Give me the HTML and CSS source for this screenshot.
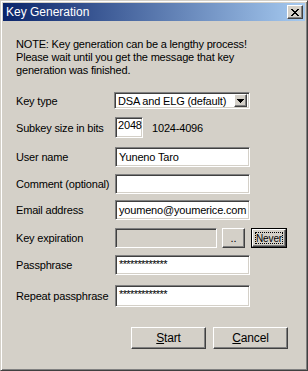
FILE: index.html
```html
<!DOCTYPE html>
<html>
<head>
<meta charset="utf-8">
<title>Key Generation</title>
<link rel="stylesheet" href="styles.css">
</head>
<body>
<div class="window">
  <div class="titlebar">
    <span class="title">Key Generation</span>
    <span class="close raised"><svg class="xicon" width="8" height="7" viewBox="0 0 8 7"><path d="M0 0h2v1H0z M6 0h2v1H6z M1 1h2v1H1z M5 1h2v1H5z M2 2h4v1H2z M3 3h2v1H3z M2 4h4v1H2z M1 5h2v1H1z M5 5h2v1H5z M0 6h2v1H0z M6 6h2v1H6z"/></svg></span>
  </div>
  <div class="content">
    <p class="note">NOTE: Key generation can be a lengthy process!<br>Please wait until you get the message that key<br>generation was finished.</p>
    <div class="form">
      <div class="row r1">
        <span class="label">Key type</span>
        <div class="select sunken">
          <span class="select-text">DSA and ELG (default)</span>
          <span class="drop raised"><svg width="7" height="4" viewBox="0 0 7 4"><path d="M0 0h7v1H0z M1 1h5v1H1z M2 2h3v1H2z M3 3h1v1H3z"/></svg></span>
        </div>
      </div>
      <div class="row r2">
        <span class="label">Subkey size in bits</span>
        <span class="input sunken small">2048</span>
        <span class="range">1024-4096</span>
      </div>
      <div class="row r3">
        <span class="label">User name</span>
        <span class="input sunken">Yuneno Taro</span>
      </div>
      <div class="row r4">
        <span class="label">Comment (optional)</span>
        <span class="input sunken"></span>
      </div>
      <div class="row r5">
        <span class="label">Email address</span>
        <span class="input sunken">youmeno@youmerice.com</span>
      </div>
      <div class="row r6">
        <span class="label">Key expiration</span>
        <span class="input sunken disabled"></span>
        <span class="btn raised dots">..</span>
        <span class="btn default never"><span class="never-inner raised"><span class="focus">Never</span></span></span>
      </div>
      <div class="row r7">
        <span class="label">Passphrase</span>
        <span class="input sunken pass">*************</span>
      </div>
      <div class="row r8">
        <span class="label">Repeat passphrase</span>
        <span class="input sunken pass tall">*************</span>
      </div>
    </div>
    <div class="actions">
      <span class="btn raised action"><u>S</u>tart</span>
      <span class="btn raised action"><u>C</u>ancel</span>
    </div>
  </div>
</div>
</body>
</html>
```
FILE: styles.css
```css
html, body {
  margin: 0;
  padding: 0;
  background: #d4d0c8;
}
body {
  font-family: "Liberation Sans", Arial, sans-serif;
  font-size: 11px;
  letter-spacing: -0.18px;
  color: #000;
}
.window {
  box-sizing: border-box;
  width: 308px;
  height: 371px;
  border: 1px solid;
  border-color: #d4d0c8 #404040 #404040 #d4d0c8;
  box-shadow: inset 1px 1px #fff, inset -1px -1px #808080;
  padding: 2px;
  background: #d4d0c8;
  display: flex;
  flex-direction: column;
}
.titlebar {
  height: 18px;
  flex: none;
  background: linear-gradient(to right, #0a246a, #a6caf0);
  display: flex;
  align-items: center;
  justify-content: space-between;
  padding: 0 2px 0 3px;
}
.title {
  color: #fff;
  font-size: 12px;
  line-height: 14px;
  letter-spacing: 0;
}
.raised {
  box-sizing: border-box;
  background: #d4d0c8;
  border: 1px solid;
  border-color: #fff #404040 #404040 #fff;
  box-shadow: inset -1px -1px #808080;
}
.sunken {
  box-sizing: border-box;
  background: #fff;
  border: 1px solid;
  border-color: #808080 #fff #fff #808080;
  box-shadow: inset 1px 1px #404040, inset -1px -1px #d4d0c8;
}
.close {
  width: 16px;
  height: 14px;
  display: flex;
  align-items: center;
  justify-content: center;
  padding-right: 1px;
}
.xicon {
  display: block;
  shape-rendering: crispEdges;
}
.content {
  padding: 17px 0 0 13px;
}
.note {
  margin: 0;
  line-height: 13px;
}
.form {
  margin-top: 15px;
  display: flex;
  flex-direction: column;
}
.row {
  display: flex;
  align-items: center;
}
.r2 { margin-top: 8px; }
.r3 { margin-top: 9px; }
.r4 { margin-top: 7px; }
.r5 { margin-top: 6px; }
.r6 { margin-top: 8px; }
.r7 { margin-top: 7px; }
.r8 { margin-top: 10px; }
.label {
  width: 99px;
  flex: none;
  white-space: nowrap;
}
.select {
  margin-left: -1px;
  width: 136px;
  height: 17px;
  display: flex;
  align-items: center;
  padding: 2px 2px 2px 3px;
}
.select-text {
  flex: 1;
  white-space: nowrap;
  overflow: hidden;
}
.drop {
  width: 13px;
  height: 13px;
  flex: none;
  display: flex;
  align-items: center;
  justify-content: center;
  padding: 1px 1px 0 0;
}
.drop svg {
  display: block;
  shape-rendering: crispEdges;
}
.input {
  width: 135px;
  height: 20px;
  display: flex;
  align-items: center;
  padding-left: 3px;
  white-space: nowrap;
  overflow: hidden;
}
.input.small {
  width: 28px;
  height: 21px;
  align-items: flex-start;
  padding-left: 2px;
  padding-top: 1px;
}
.range {
  margin-left: 9px;
}
.input.disabled {
  width: 102px;
  background: #d4d0c8;
}
.input.pass {
  letter-spacing: -0.6px;
  align-items: flex-start;
  padding-top: 2px;
  font-size: 11px;
}
.input.tall {
  height: 22px;
}
.btn {
  display: flex;
  align-items: center;
  justify-content: center;
  white-space: nowrap;
}
.dots {
  margin-left: 5px;
  width: 23px;
  height: 20px;
}
.never {
  margin-left: 6px;
  width: 36px;
  height: 20px;
  box-sizing: border-box;
  border: 1px solid #000;
  padding: 0;
}
.never-inner {
  width: 100%;
  height: 100%;
  display: flex;
  padding: 2px;
  overflow: hidden;
}
.focus {
  flex: 1;
  outline: 1px dotted #000;
  outline-offset: -1px;
  display: flex;
  align-items: center;
  justify-content: center;
  font-size: 10px;
  letter-spacing: -0.1px;
  overflow: hidden;
}
.actions {
  margin-top: 20px;
  margin-right: 17px;
  display: flex;
  justify-content: flex-end;
  gap: 7px;
}
.action {
  width: 75px;
  height: 22px;
  font-size: 12px;
}
.action u {
  text-decoration-thickness: 1px;
  text-underline-offset: 1px;
}
```
